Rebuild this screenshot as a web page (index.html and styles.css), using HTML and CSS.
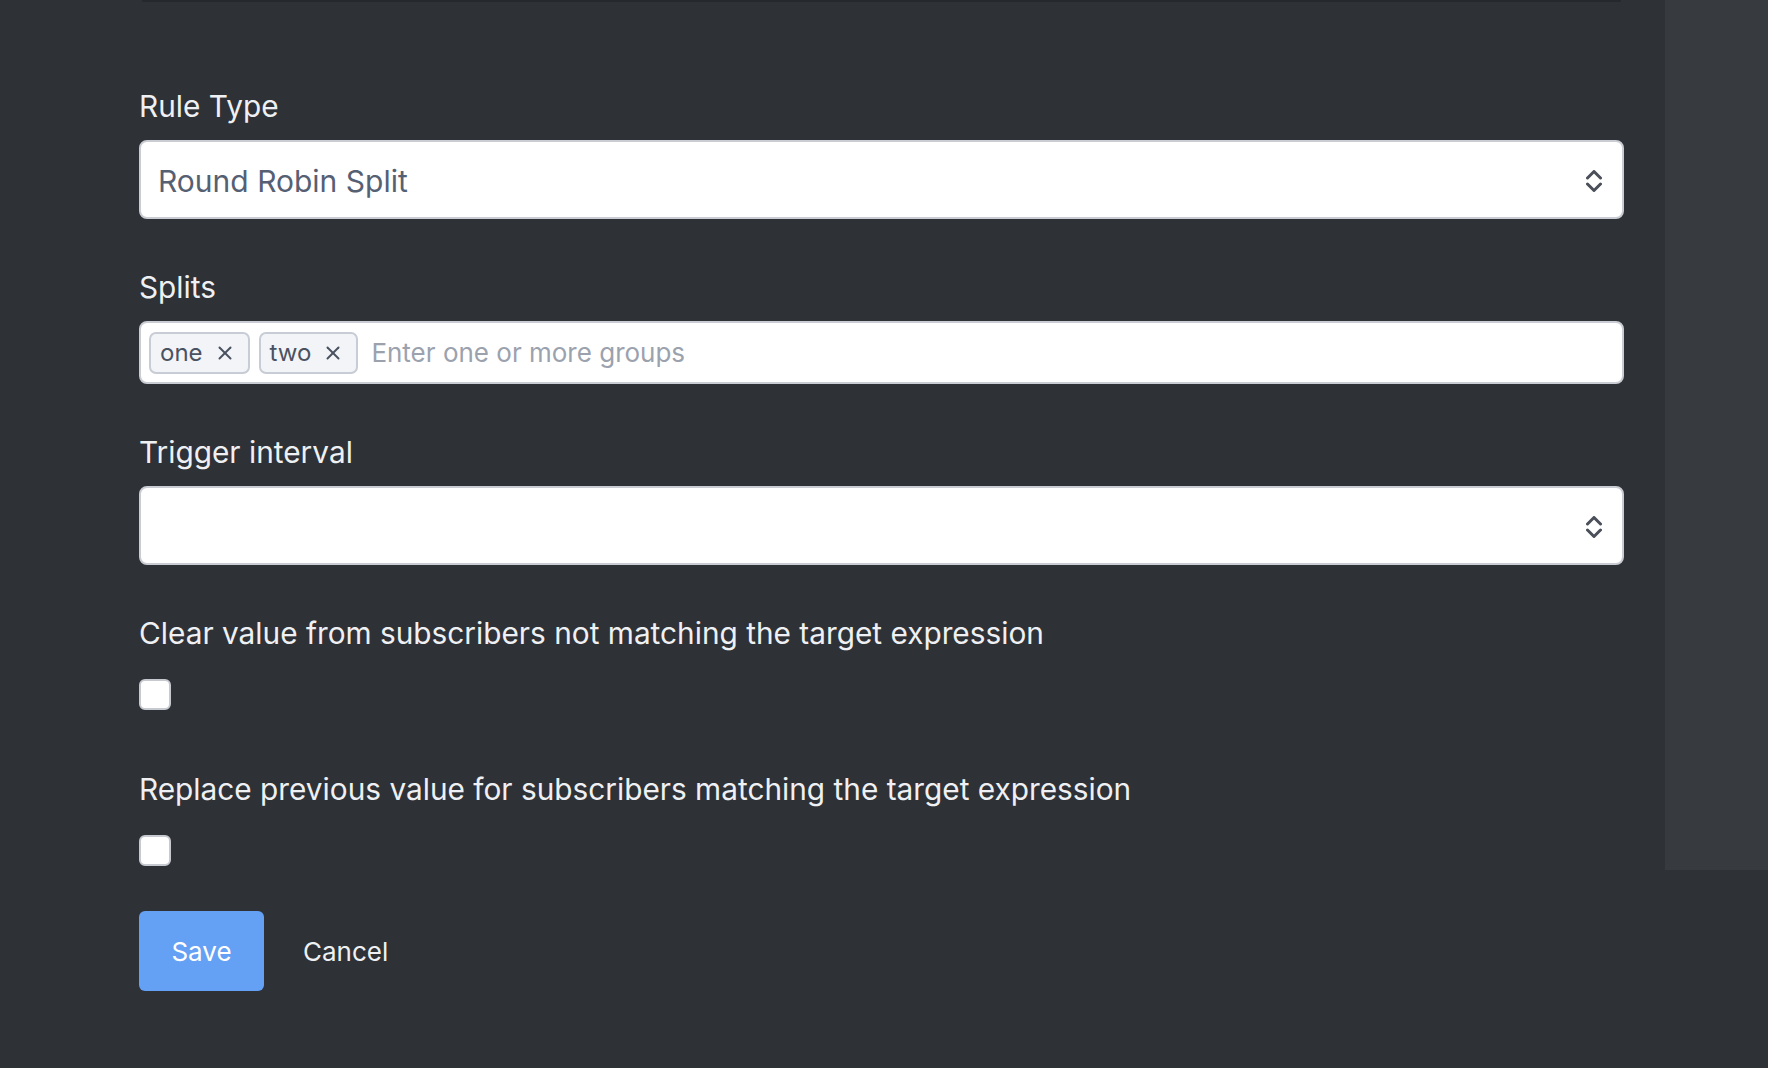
FILE: index.html
```html
<!DOCTYPE html>
<html lang="en">
<head>
  <meta charset="UTF-8" />
  <meta name="viewport" content="width=device-width, initial-scale=1.0"/>
  <title>Edit rule</title>
  <link rel="stylesheet" href="styles.css">
</head>
<body>

  <div class="page">
    <div class="main">
      <div class="top-edge"></div>

      <form class="rule-form">
        <div class="field">
          <label class="field-label">Rule Type</label>
          <div class="select">
            <span class="select-value">Round Robin Split</span>
            <svg class="select-arrow" width="16" height="22" viewBox="0 0 16 22">
              <polyline points="1.5,8 8,1.5 14.5,8" />
              <polyline points="1.5,14 8,20.5 14.5,14" />
            </svg>
          </div>
        </div>

        <div class="field">
          <label class="field-label">Splits</label>
          <div class="tags-input">
            <span class="tag">one
              <svg class="tag-remove" width="14" height="14" viewBox="0 0 14 14">
                <line x1="1.5" y1="1.5" x2="12.5" y2="12.5" />
                <line x1="12.5" y1="1.5" x2="1.5" y2="12.5" />
              </svg>
            </span>
            <span class="tag">two
              <svg class="tag-remove" width="14" height="14" viewBox="0 0 14 14">
                <line x1="1.5" y1="1.5" x2="12.5" y2="12.5" />
                <line x1="12.5" y1="1.5" x2="1.5" y2="12.5" />
              </svg>
            </span>
            <input class="tags-entry" type="text" placeholder="Enter one or more groups">
          </div>
        </div>

        <div class="field">
          <label class="field-label">Trigger interval</label>
          <div class="select">
            <span class="select-value"></span>
            <svg class="select-arrow" width="16" height="22" viewBox="0 0 16 22">
              <polyline points="1.5,8 8,1.5 14.5,8" />
              <polyline points="1.5,14 8,20.5 14.5,14" />
            </svg>
          </div>
        </div>

        <div class="field check-field">
          <label class="field-label check-label">Clear value from subscribers not matching the target expression</label>
          <input class="checkbox" type="checkbox">
        </div>

        <div class="field check-field last">
          <label class="field-label check-label">Replace previous value for subscribers matching the target expression</label>
          <input class="checkbox" type="checkbox">
        </div>

        <div class="actions">
          <button type="button" class="btn-save">Save</button>
          <button type="button" class="btn-cancel">Cancel</button>
        </div>
      </form>
    </div>

    <div class="side-panel"></div>
  </div>

</body>
</html>
```

FILE: styles.css
```css
body {
  margin: 0;
  background-color: #2e3136;
  font-family: Inter, Roboto, "Liberation Sans", sans-serif;
  color: #eef0f3;
}
.page {
  display: flex;
  align-items: flex-start;
}
.main {
  flex: 1;
  padding: 0 41px 0 139px;
}
.side-panel {
  width: 103px;
  height: 870px;
  background-color: #373b3f;
}
.top-edge {
  height: 2px;
  margin: 0 3px;
  background-color: #25282c;
}
.rule-form {
  padding-top: 87px;
}
.field {
  margin-bottom: 51px;
}
.field-label {
  display: block;
  font-size: 29.8px;
  line-height: 34px;
  margin-bottom: 17px;
}
.select {
  box-sizing: border-box;
  height: 79px;
  display: flex;
  align-items: center;
  justify-content: space-between;
  padding: 2px 20px 0 17px;
  background-color: #fff;
  border: 2px solid #c9ccd3;
  border-radius: 8px;
}
.select-value {
  font-size: 30px;
  color: #566073;
}
.select-arrow polyline {
  fill: none;
  stroke: #4a4f59;
  stroke-width: 3;
  stroke-linecap: round;
  stroke-linejoin: round;
}
.tags-input {
  box-sizing: border-box;
  height: 63px;
  display: flex;
  align-items: center;
  gap: 9px;
  padding: 0 8px;
  background-color: #fff;
  border: 2px solid #c9ccd3;
  border-radius: 8px;
}
.tag {
  box-sizing: border-box;
  height: 42px;
  display: flex;
  align-items: center;
  gap: 15px;
  padding: 0 16px 0 9px;
  background-color: #f2f4f7;
  border: 2px solid #c7ccd5;
  border-radius: 7px;
  font-size: 24px;
  color: #4a5262;
}
.tag-remove line {
  stroke: #4a5262;
  stroke-width: 2;
  stroke-linecap: round;
}
.tags-entry {
  flex: 1;
  margin-left: 4px;
  padding: 0;
  border: none;
  outline: none;
  background: transparent;
  font-family: inherit;
  font-size: 26px;
  color: #4a5262;
}
.tags-entry::placeholder {
  color: #9ba2ae;
}
.check-field {
  margin-bottom: 62px;
}
.check-field.last {
  margin-bottom: 45px;
}
.check-label {
  margin-bottom: 29px;
}
.checkbox {
  appearance: none;
  display: block;
  box-sizing: border-box;
  width: 32px;
  height: 31px;
  margin: 0;
  background-color: #fff;
  border: 2px solid #c6c9d0;
  border-radius: 6px;
}
.actions {
  display: flex;
  align-items: center;
}
.btn-save {
  width: 125px;
  height: 80px;
  border: none;
  border-radius: 6px;
  background-color: #64a0f4;
  color: #fff;
  font-family: inherit;
  font-size: 26px;
  cursor: pointer;
}
.btn-cancel {
  margin-left: 39px;
  padding: 0;
  border: none;
  background: none;
  color: #eef0f3;
  font-family: inherit;
  font-size: 26px;
  cursor: pointer;
}
```
